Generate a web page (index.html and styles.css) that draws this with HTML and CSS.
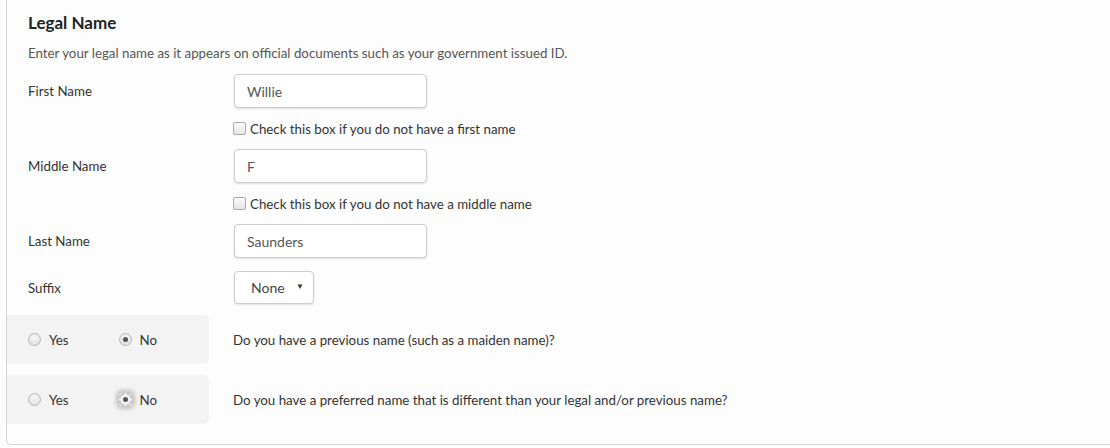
FILE: index.html
```html
<!DOCTYPE html>
<html lang="en">
<head>
<meta charset="utf-8">
<title>Legal Name</title>
<link rel="stylesheet" href="styles.css">
</head>
<body>
<div class="card">
  <h2 class="title">Legal Name</h2>
  <p class="desc">Enter your legal name as it appears on official documents such as your government issued ID.</p>

  <div class="row">
    <label class="lbl">First Name</label>
    <input class="txt" type="text" value="Willie">
  </div>
  <div class="chk-row">
    <label class="chk"><input type="checkbox"><span>Check this box if you do not have a first name</span></label>
  </div>

  <div class="row">
    <label class="lbl">Middle Name</label>
    <input class="txt" type="text" value="F">
  </div>
  <div class="chk-row">
    <label class="chk"><input type="checkbox"><span>Check this box if you do not have a middle name</span></label>
  </div>

  <div class="row">
    <label class="lbl">Last Name</label>
    <input class="txt" type="text" value="Saunders">
  </div>

  <div class="row row-suffix">
    <label class="lbl">Suffix</label>
    <div class="sel"><span>None</span><span class="arrow">▼</span></div>
  </div>

  <div class="q-row">
    <div class="panel">
      <label class="opt"><input type="radio" name="prev"><span>Yes</span></label>
      <label class="opt"><input type="radio" name="prev" checked><span>No</span></label>
    </div>
    <div class="question">Do you have a previous name (such as a maiden name)?</div>
  </div>

  <div class="q-row">
    <div class="panel">
      <label class="opt"><input type="radio" name="pref"><span>Yes</span></label>
      <label class="opt"><input type="radio" name="pref" class="focused" checked><span>No</span></label>
    </div>
    <div class="question">Do you have a preferred name that is different than your legal and/or previous name?</div>
  </div>
</div>
</body>
</html>
```
FILE: styles.css
```css
html, body {
  margin: 0;
  padding: 0;
  background: #ffffff;
}
body {
  font-family: "Lato", "Open Sans", sans-serif;
  color: #333;
  font-size: 13.3px;
  overflow: hidden;
}
.card {
  margin-left: 6px;
  margin-right: -10px;
  background: #fdfdfd;
  border-left: 1px solid #d2d2d2;
  border-bottom: 1px solid #d2d2d2;
  border-bottom-left-radius: 5px;
  padding: 12px 0 20px 0;
  height: 445px;
  box-sizing: border-box;
}
.title {
  margin: 0 0 0 21px;
  font-size: 17px;
  font-weight: 700;
  color: #222;
  line-height: 22px;
}
.desc {
  margin: 10px 0 12px 21px;
  color: #555;
  line-height: 18px;
}
.row {
  display: flex;
  align-items: center;
  padding-left: 21px;
}
.lbl {
  width: 206px;
  color: #333;
}
.txt {
  width: 193px;
  height: 34px;
  box-sizing: border-box;
  border: 1px solid #ccc;
  border-radius: 4px;
  box-shadow: 0 1px 2px rgba(0,0,0,0.12);
  padding: 0 12px;
  font-family: inherit;
  font-size: 14px;
  color: #555;
  background: #fff;
  margin: 0;
}
.chk-row {
  margin: 12px 0 12px 226px;
  height: 17px;
  display: flex;
  align-items: center;
}
.chk {
  display: flex;
  align-items: center;
  gap: 4px;
}
.chk input {
  appearance: none;
  -webkit-appearance: none;
  margin: 0;
  width: 13px;
  height: 13px;
  border: 1px solid #a9a9a9;
  border-radius: 2px;
  background: linear-gradient(#fafafa, #e6e6e6);
  box-sizing: border-box;
}
.row-suffix {
  margin-top: 13px;
}
.sel {
  width: 80px;
  height: 33px;
  box-sizing: border-box;
  border: 1px solid #ccc;
  border-radius: 4px;
  box-shadow: 0 1px 2px rgba(0,0,0,0.12);
  background: #fff;
  display: flex;
  align-items: center;
  justify-content: space-between;
  padding: 0 9px 0 16px;
  font-size: 14px;
  color: #444;
}
.sel .arrow {
  font-size: 8px;
  color: #333;
  margin-top: -3px;
}
.q-row {
  display: flex;
  align-items: center;
  margin-top: 11px;
}
.panel {
  width: 202px;
  height: 49px;
  background: #f3f3f3;
  border-radius: 0 5px 5px 0;
  display: flex;
  align-items: center;
  padding-left: 21px;
  box-sizing: border-box;
}
.opt {
  display: flex;
  align-items: center;
  width: 92px;
  gap: 8px;
}
.opt input {
  appearance: none;
  -webkit-appearance: none;
  margin: 0;
  width: 13px;
  height: 13px;
  border-radius: 50%;
  border: 1px solid #b4b4b4;
  background: radial-gradient(circle at 50% 30%, #f7f7f7, #dcdcdc);
  box-sizing: border-box;
  position: relative;
}
.opt input:checked::after {
  content: "";
  position: absolute;
  left: 3px;
  top: 3px;
  width: 5px;
  height: 5px;
  border-radius: 50%;
  background: #555;
}
.opt input.focused {
  border-radius: 3px;
  background: radial-gradient(circle, #f3f3f3 0, #f3f3f3 5px, #b4b4b4 5.5px, #dcdcdc 6.5px);
  box-shadow: 0 0 4px 3px rgba(0,0,0,0.2);
  border-color: transparent;
}
.question {
  margin-left: 24px;
  color: #333;
}
```
